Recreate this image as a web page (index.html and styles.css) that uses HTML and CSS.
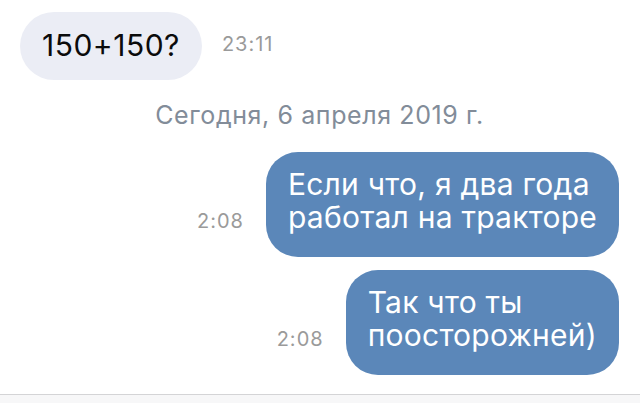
FILE: index.html
```html
<!DOCTYPE html>
<html lang="ru">
<head>
    <meta charset="UTF-8">
    <meta name="viewport" content="width=device-width, initial-scale=1.0">
    <title>Чат</title>
    <link rel="stylesheet" href="styles.css">
</head>
<body>
    <div class="chat">
        <div class="row">
            <div class="bubble in">150+150?</div>
            <span class="time">23:11</span>
        </div>

        <div class="date">Сегодня, 6 апреля 2019 г.</div>

        <div class="row out">
            <span class="time">2:08</span>
            <div class="bubble mine">Если что, я два года<br>работал на тракторе</div>
        </div>
        <div class="row out">
            <span class="time">2:08</span>
            <div class="bubble mine">Так что ты<br>поосторожней)</div>
        </div>
    </div>
    <div class="composer"></div>
</body>
</html>
```

FILE: styles.css
```css
html, body {
    height: 100%;
}
body {
    margin: 0;
    background-color: #fff;
    font-family: Inter, "Liberation Sans", sans-serif;
    display: flex;
    flex-direction: column;
}

.chat {
    flex: 1;
    display: flex;
    flex-direction: column;
    padding: 12px 21px 0 20px;
}

.row {
    display: flex;
    align-items: flex-end;
    gap: 20px;
}
.row.out {
    justify-content: flex-end;
    gap: 22px;
    margin-bottom: 13px;
}

.bubble {
    font-size: 30px;
    line-height: 33px;
    letter-spacing: 0.25px;
    padding: 17px 22px 18px;
    border-radius: 34px;
}
.bubble.in {
    background-color: #ebedf5;
    color: #0b0b0b;
    letter-spacing: 0.5px;
}
.bubble.mine {
    background-color: #5b87b9;
    color: #fff;
    padding: 16px 22px 23px;
    border-radius: 32px;
}

.time {
    font-size: 20px;
    color: #9a9a9a;
    margin-bottom: 24px;
    letter-spacing: 1px;
}

.date {
    text-align: center;
    font-size: 25px;
    line-height: 30px;
    letter-spacing: 0.6px;
    color: #828c99;
    margin: 20px 0 22px;
}

.composer {
    height: 8px;
    border-top: 1px solid #d4d4d6;
    background-color: #f7f7f8;
}
```
